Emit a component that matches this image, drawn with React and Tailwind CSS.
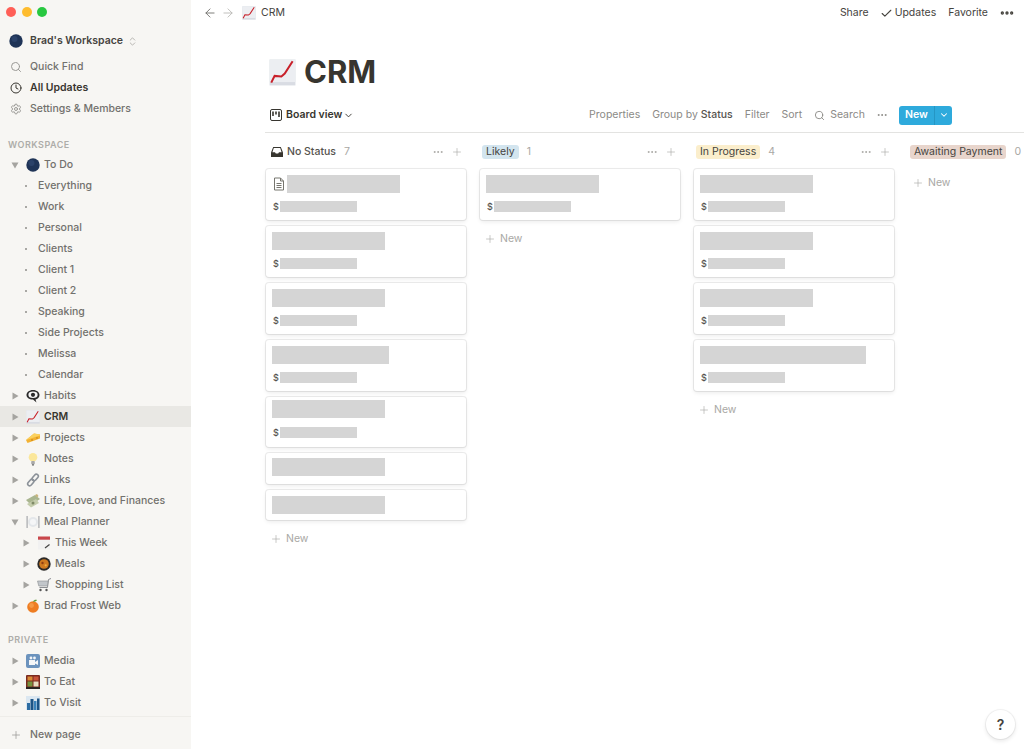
import { ChevronDown, ChevronsUpDown, Check, Search, Clock, Settings, Plus, ArrowLeft, ArrowRight, MoreHorizontal } from 'lucide-react'

// emoji are drawn because no colour emoji font is available
function Chart({ size = 14 }) {
  return (
    <svg width={size} height={size} viewBox="0 0 24 24" className="shrink-0">
      <rect x="0.5" y="0.5" width="23" height="23" fill="#d9dce3" />
      <rect x="0.5" y="0.5" width="23" height="20" fill="#eceef2" />
      <path d="M2 21 L5 15 L11 15.5 L14 13 L21 2" fill="none" stroke="#c8202a" strokeWidth="1.8" />
    </svg>
  )
}

function Ball() {
  return (
    <svg width="14" height="14" viewBox="0 0 14 14" className="shrink-0">
      <circle cx="7" cy="7" r="6.7" fill="#1f3457" />
      <circle cx="5.5" cy="5" r="3" fill="#2b4269" />
    </svg>
  )
}

function Eye() {
  return (
    <svg width="14" height="14" viewBox="0 0 14 14" className="shrink-0">
      <path d="M7 1 C11 1 13.5 3.5 13.5 6 C13.5 8.5 11.5 10 9.5 10.5 L10.5 13.5 L7 10.5 C3 10.5 0.5 8.5 0.5 6 C0.5 3.5 3 1 7 1Z" fill="#2a2a2a" />
      <ellipse cx="7" cy="5.8" rx="4.6" ry="3.2" fill="#f5f5f5" />
      <circle cx="7" cy="5.8" r="2.1" fill="#2a2a2a" />
    </svg>
  )
}

function Cheese() {
  return (
    <svg width="14" height="14" viewBox="0 0 14 14" className="shrink-0">
      <path d="M0 9 L8 2.5 L14 3.5 L14 7.5 L1.5 12Z" fill="#f3b233" />
      <path d="M0 9 L14 4.5 L14 3.5 L8 2.5Z" fill="#fbd15e" />
      <circle cx="6" cy="9" r="1" fill="#d48f1c" />
      <circle cx="11" cy="7" r="0.9" fill="#d48f1c" />
    </svg>
  )
}

function Bulb() {
  return (
    <svg width="14" height="14" viewBox="0 0 14 14" className="shrink-0">
      <circle cx="7" cy="5.2" r="4.3" fill="#fbe79a" />
      <rect x="5.2" y="9" width="3.6" height="3.4" rx="0.8" fill="#a9a9a9" />
      <rect x="6" y="12.3" width="2" height="1.2" fill="#666" />
    </svg>
  )
}

function LinkEmoji() {
  return (
    <svg width="14" height="14" viewBox="0 0 14 14" className="shrink-0" fill="none" stroke="#8c9299" strokeWidth="1.6">
      <rect x="7.2" y="0.8" width="4" height="7.4" rx="2" transform="rotate(40 9.2 4.5)" />
      <rect x="2.8" y="5.8" width="4" height="7.4" rx="2" transform="rotate(40 4.8 9.5)" />
    </svg>
  )
}

function Money() {
  return (
    <svg width="14" height="14" viewBox="0 0 14 14" className="shrink-0">
      <path d="M0 6 L9 1 L14 5 L5 11Z" fill="#a9b58f" />
      <path d="M1 10 L10 5 L13 9 L5 13.5Z" fill="#c4ccac" />
      <circle cx="7" cy="9" r="1.5" fill="#7f8b67" />
      <path d="M9 1 L11 0 L12.5 2 L11 3.5Z" fill="#c9b27a" />
    </svg>
  )
}

function Plate() {
  return (
    <svg width="14" height="14" viewBox="0 0 14 14" className="shrink-0">
      <circle cx="7" cy="7" r="5" fill="#e4e7ea" />
      <circle cx="7" cy="7" r="3" fill="#f5f6f7" />
      <rect x="0.5" y="1" width="1.2" height="12" fill="#a5a8ab" />
      <rect x="12.3" y="1" width="1.2" height="12" fill="#a5a8ab" />
    </svg>
  )
}

function Calendar() {
  return (
    <svg width="14" height="14" viewBox="0 0 14 14" className="shrink-0">
      <rect x="1" y="0.5" width="12" height="13" fill="#f1f1f1" />
      <rect x="1" y="0.5" width="12" height="3.2" fill="#c9474b" />
      <path d="M8 12 L12.5 8.5" stroke="#444" strokeWidth="1.2" />
    </svg>
  )
}

function Meals() {
  return (
    <svg width="14" height="14" viewBox="0 0 14 14" className="shrink-0">
      <circle cx="7" cy="7" r="6.7" fill="#2c2a28" />
      <circle cx="7" cy="7" r="4.8" fill="#cf7a20" />
      <circle cx="5.5" cy="6" r="1.2" fill="#8f3f12" />
      <circle cx="8.7" cy="8.3" r="1.1" fill="#f0b040" />
    </svg>
  )
}

function Cart() {
  return (
    <svg width="14" height="14" viewBox="0 0 14 14" className="shrink-0" fill="none">
      <path d="M14 0.5 L11.5 1.5 L10.5 9.5 L2.5 9.5" stroke="#8a8d91" strokeWidth="1" />
      <path d="M0.5 3 L11 3 L10.4 8 L1.8 8Z" fill="#c2c6ca" stroke="#8a8d91" strokeWidth="0.6" />
      <circle cx="3.5" cy="12" r="1.2" fill="#555" />
      <circle cx="9.5" cy="12" r="1.2" fill="#555" />
    </svg>
  )
}

function Orange() {
  return (
    <svg width="14" height="14" viewBox="0 0 14 14" className="shrink-0">
      <circle cx="7" cy="8" r="5.8" fill="#ee7d22" />
      <circle cx="5.5" cy="6.5" r="2.4" fill="#f59a45" />
      <path d="M7 2.5 C8 0.5 10 0.5 11 1 C10 2.7 8.5 3 7 2.5Z" fill="#5d9a35" />
    </svg>
  )
}

function MediaEmoji() {
  return (
    <svg width="14" height="14" viewBox="0 0 14 14" className="shrink-0">
      <rect width="14" height="14" rx="2" fill="#6c93bd" />
      <rect x="3" y="6" width="6" height="5" fill="#f4f6f8" />
      <path d="M9 8 L12 6 L12 11 L9 9.5Z" fill="#f4f6f8" />
      <circle cx="5" cy="4" r="1.4" fill="#f4f6f8" />
      <circle cx="8.5" cy="4" r="1.4" fill="#f4f6f8" />
    </svg>
  )
}

function Bento() {
  return (
    <svg width="14" height="14" viewBox="0 0 14 14" className="shrink-0">
      <rect width="14" height="14" rx="1" fill="#7a2a20" />
      <rect x="1.5" y="1.5" width="5" height="4" fill="#d98a35" />
      <rect x="7.5" y="1.5" width="5" height="4" fill="#c9543a" />
      <rect x="1.5" y="6.5" width="5" height="5" fill="#76923f" />
      <rect x="7.5" y="6.5" width="5" height="5" fill="#e8dcc0" />
      <rect y="12" width="14" height="2" fill="#2a2422" />
    </svg>
  )
}

function City() {
  return (
    <svg width="14" height="14" viewBox="0 0 14 14" className="shrink-0">
      <rect width="14" height="14" fill="#dbe7f1" />
      <rect x="1" y="7" width="3" height="7" fill="#2d6da3" />
      <rect x="4.5" y="3" width="3" height="11" fill="#1c5486" />
      <rect x="8" y="5" width="2.5" height="9" fill="#3a82ba" />
      <rect x="11" y="2.5" width="2.5" height="11.5" fill="#1c5486" />
    </svg>
  )
}

function Sprout() {
  return (
    <svg width="14" height="14" viewBox="0 0 14 14" className="shrink-0">
      <circle cx="5" cy="1" r="1" fill="#b7d79a" />
      <circle cx="8" cy="1" r="1" fill="#b7d79a" />
    </svg>
  )
}

function Caret({ open }) {
  return (
    <svg width="8" height="8" viewBox="0 0 8 8" className="shrink-0">
      {open ? <path d="M0.5 1.5 L7.5 1.5 L4 7.5Z" fill="#a5a4a0" /> : <path d="M1.5 0.5 L7.5 4 L1.5 7.5Z" fill="#a5a4a0" />}
    </svg>
  )
}

function PageRow({ icon, label, open, nested, active }) {
  return (
    <div className={`flex h-[21px] items-center ${nested ? 'pl-[22px]' : 'pl-[11px]'} ${active ? 'bg-[#e9e8e4] font-semibold text-[#37352f]' : 'text-[#72716d]'}`}>
      <Caret open={open} />
      <span className="ml-[7px] flex w-[14px] justify-center">{icon}</span>
      <span className="ml-[4px] whitespace-nowrap">{label}</span>
    </div>
  )
}

const subPages = ['Everything', 'Work', 'Personal', 'Clients', 'Client 1', 'Client 2', 'Speaking', 'Side Projects', 'Melissa', 'Calendar']

function Sidebar() {
  return (
    <aside className="flex h-full w-[191px] shrink-0 flex-col bg-[#f7f6f3] text-[10.5px] font-medium">
      <div className="min-h-0 flex-1 overflow-hidden">
        <div className="flex h-[24px] items-center gap-[5.5px] pl-[6px]">
          <span className="h-[10px] w-[10px] rounded-full bg-[#ff5f57]" />
          <span className="h-[10px] w-[10px] rounded-full bg-[#febc2e]" />
          <span className="h-[10px] w-[10px] rounded-full bg-[#28c840]" />
        </div>
        <div className="mt-[5px] flex h-[24px] items-center pl-[9px] text-[#45433e]">
          <Ball />
          <span className="ml-[7px] whitespace-nowrap text-[10.5px] font-semibold">Brad's Workspace</span>
          <ChevronsUpDown size={11} strokeWidth={1.5} className="ml-[4px] text-[#9a9995]" />
        </div>
        <div className="mt-[3px] flex h-[21px] items-center pl-[10px] text-[#72716d]">
          <Search size={12} strokeWidth={2} className="text-[#9a9995]" />
          <span className="ml-[8px]">Quick Find</span>
        </div>
        <div className="flex h-[21px] items-center pl-[10px] font-semibold text-[#37352f]">
          <Clock size={12} strokeWidth={2} />
          <span className="ml-[8px]">All Updates</span>
        </div>
        <div className="flex h-[21px] items-center pl-[10px] text-[#72716d]">
          <Settings size={12} strokeWidth={2} className="text-[#9a9995]" />
          <span className="ml-[8px]">Settings &amp; Members</span>
        </div>
        <div className="mt-[17px] h-[18px] pl-[8px] text-[9px] leading-[18px] font-semibold tracking-[0.5px] text-[#aeada9]">WORKSPACE</div>
        <PageRow icon={<Ball />} label="To Do" open />
        {subPages.map((page) => (
          <div key={page} className="flex h-[21px] items-center pl-[25px] text-[#72716d]">
            <span className="h-[2px] w-[2px] rounded-full bg-[#8f8e8a]" />
            <span className="ml-[11px]">{page}</span>
          </div>
        ))}
        <PageRow icon={<Eye />} label="Habits" />
        <PageRow icon={<Chart />} label="CRM" active />
        <PageRow icon={<Cheese />} label="Projects" />
        <PageRow icon={<Bulb />} label="Notes" />
        <PageRow icon={<LinkEmoji />} label="Links" />
        <PageRow icon={<Money />} label="Life, Love, and Finances" />
        <PageRow icon={<Plate />} label="Meal Planner" open />
        <PageRow icon={<Calendar />} label="This Week" nested />
        <PageRow icon={<Meals />} label="Meals" nested />
        <PageRow icon={<Cart />} label="Shopping List" nested />
        <PageRow icon={<Orange />} label="Brad Frost Web" />
        <div className="mt-[15px] h-[19px] pl-[8px] text-[9px] leading-[18px] font-semibold tracking-[0.5px] text-[#aeada9]">PRIVATE</div>
        <PageRow icon={<MediaEmoji />} label="Media" />
        <PageRow icon={<Bento />} label="To Eat" />
        <PageRow icon={<City />} label="To Visit" />
        <div className="flex h-[21px] items-center pl-[26px]"><Sprout /></div>
      </div>
      <div className="flex h-[33px] shrink-0 items-center border-t border-[#eeede9] pt-[3px] pl-[10px] text-[#72716d]">
        <Plus size={12} strokeWidth={1.5} className="text-[#9a9995]" />
        <span className="ml-[8px]">New page</span>
      </div>
    </aside>
  )
}

function Card({ title, dollar, hasIcon, pad = 'pt-[6px] pb-[8px]', gap = 'mt-[8px]' }) {
  return (
    <div className={`rounded-[3px] bg-white px-[6px] shadow-[0_0_0_1px_rgba(15,15,15,0.08),0_2px_4px_rgba(15,15,15,0.08)] ${pad}`}>
      <div className="flex items-center">
        {hasIcon && (
          <svg width="14" height="14" viewBox="0 0 14 14" fill="none" stroke="#77766f" strokeWidth="1" className="mr-[1px] shrink-0">
            <path d="M2.5 1 H8.5 L11.5 4 V13 H2.5 Z M8.5 1 V4 H11.5 M4.5 6.5 H9.5 M4.5 8.5 H9.5 M4.5 10.5 H9.5" />
          </svg>
        )}
        <div className="h-[18px] bg-[#d5d5d5]" style={{ width: title }} />
      </div>
      {dollar && (
        <div className={`flex h-[11px] items-center text-[9px] font-medium text-[#55534e] ${gap}`}>
          <span className="ml-[1px] w-[7px]">$</span>
          <div className="h-[11px] w-[77px] bg-[#d5d5d5]" />
        </div>
      )}
    </div>
  )
}

function AddNew({ empty }) {
  return (
    <div className={`flex h-[26px] items-center pl-[5px] text-[10.5px] text-[#a9a8a4] ${empty ? 'mt-[1px]' : 'mt-[6px]'}`}>
      <Plus size={12} strokeWidth={1.25} />
      <span className="ml-[4px]">New</span>
    </div>
  )
}

function Column({ header, count, actions = true, cards }) {
  return (
    <div className="w-[202px] shrink-0">
      <div className="flex h-[36px] items-center pt-[1px] text-[10.5px]">
        {header}
        <span className="ml-[8px] text-[#a9a8a4]">{count}</span>
        {actions && (
          <div className="ml-auto flex items-center gap-[7px] pr-[4px] text-[#a9a8a4]">
            <MoreHorizontal size={12} />
            <Plus size={12} strokeWidth={1.25} />
          </div>
        )}
      </div>
      <div className="flex flex-col gap-[6px] px-[1px]">
        {cards.map((card, i) => (
          <Card key={i} {...card} />
        ))}
      </div>
      <AddNew empty={cards.length === 0} />
    </div>
  )
}

function Pill({ bg, children }) {
  return <span className={`ml-[3px] rounded-[3px] px-[4px] leading-[14px] whitespace-nowrap text-[#45433e] ${bg}`}>{children}</span>
}

const noStatus = [
  { title: 113, dollar: true, hasIcon: true },
  { title: 113, dollar: true },
  { title: 113, dollar: true },
  { title: 117, dollar: true },
  { title: 113, dollar: true, pad: 'pt-[3px] pb-[9px]', gap: 'mt-[9px]' },
  { title: 113, pad: 'pt-[5px] pb-[8px]' },
  { title: 113, pad: 'pt-[6px] pb-[6px]' },
]
const likely = [{ title: 113, dollar: true }]
const inProgress = [
  { title: 113, dollar: true },
  { title: 113, dollar: true },
  { title: 113, dollar: true },
  { title: 166, dollar: true },
]

export default function App() {
  return (
    <div className="flex h-[749px] w-[1024px] overflow-hidden bg-white font-['Inter',sans-serif] text-[#37352f]">
      <Sidebar />
      <main className="relative min-w-0 flex-1">
        <div className="flex h-[26px] items-center pl-[12px] pr-[9px] text-[10.5px] text-[#45433e]">
          <ArrowLeft size={14} strokeWidth={1.5} className="text-[#6d6c68]" />
          <ArrowRight size={14} strokeWidth={1.5} className="ml-[4px] text-[#b8b7b3]" />
          <span className="ml-[7px]"><Chart /></span>
          <span className="ml-[5px]">CRM</span>
          <span className="ml-auto">Share</span>
          <Check size={13} strokeWidth={2} className="ml-[11px]" />
          <span className="ml-[2px]">Updates</span>
          <span className="ml-[12px]">Favorite</span>
          <MoreHorizontal size={16} strokeWidth={3} className="ml-[11px]" />
        </div>
        <div className="pl-[74px]">
          <div className="mt-[22px] flex h-[48px] items-center pl-[4px]">
            <Chart size={27} />
            <h1 className="ml-[8px] text-[31px] font-bold">CRM</h1>
          </div>
          <div className="flex h-[37px] items-center border-b border-[#e3e3e1] pt-[2px] pl-[5px] pr-[72px] text-[10.5px] text-[#8b8a86]">
            <svg width="12" height="12" viewBox="0 0 12 12" fill="none" stroke="#37352f" strokeWidth="1" className="shrink-0">
              <rect x="0.5" y="0.5" width="11" height="11" rx="1.5" />
              <path d="M3 2.5 V7 M6 2.5 V5.5 M9 2.5 V8" strokeWidth="1.6" />
            </svg>
            <span className="ml-[4px] font-semibold text-[#37352f]">Board view</span>
            <ChevronDown size={11} strokeWidth={2} className="ml-[1px] text-[#37352f]" />
            <span className="ml-auto">Properties</span>
            <span className="ml-[12px]">Group by <span className="font-medium text-[#55534e]">Status</span></span>
            <span className="ml-[12px]">Filter</span>
            <span className="ml-[12px]">Sort</span>
            <Search size={11} strokeWidth={2} className="ml-[12px]" />
            <span className="ml-[5px]">Search</span>
            <MoreHorizontal size={12} className="ml-[11px]" />
            <div className="ml-[11px] flex h-[19px] items-center rounded-[3px] bg-[#2eaadc] font-semibold text-white">
              <span className="flex h-full w-[36px] items-center justify-center border-r border-[#2596c4]">New</span>
              <span className="flex w-[17px] justify-center"><ChevronDown size={10} strokeWidth={2.5} /></span>
            </div>
          </div>
          <div className="flex gap-[12px]">
            <Column
              count="7"
              cards={noStatus}
              header={
                <>
                  <svg width="12" height="12" viewBox="0 0 12 12" className="ml-[6px] shrink-0">
                    <path d="M2.2 1 H9.8 L12 6.5 V11 H0 V6.5 Z" fill="#37352f" />
                    <path d="M2.8 2 H9.2 L10.6 6.2 H8 L7.2 7.6 H4.8 L4 6.2 H1.4 Z" fill="#fff" />
                  </svg>
                  <span className="ml-[4px] font-medium text-[#55534e]">No Status</span>
                </>
              }
            />
            <Column count="1" cards={likely} header={<Pill bg="bg-[#d3e5ef]">Likely</Pill>} />
            <Column count="4" cards={inProgress} header={<Pill bg="bg-[#fbeecc]">In Progress</Pill>} />
            <Column count="0" cards={[]} actions={false} header={<Pill bg="bg-[#e8d5cc]">Awaiting Payment</Pill>} />
          </div>
        </div>
        <div className="absolute right-[9px] bottom-[10px] flex h-[29px] w-[29px] items-center justify-center rounded-full bg-white text-[14px] font-semibold text-[#45433e] shadow-[0_0_0_1px_rgba(15,15,15,0.05),0_2px_4px_rgba(15,15,15,0.1)]">?</div>
      </main>
    </div>
  )
}
